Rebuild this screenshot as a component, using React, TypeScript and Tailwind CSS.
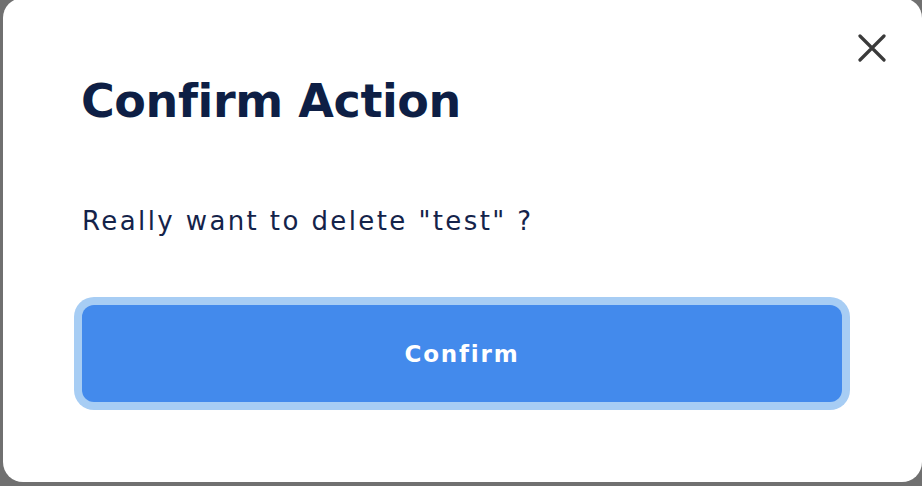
import React from "react";

export default function App() {
  return (
    <div className="w-[922px] h-[486px] bg-[#707070] overflow-hidden">
      <div
        className="relative ml-[3px] mt-[-2px] w-[919px] h-[484px] bg-white rounded-[20px] pl-[79px] pr-[79px]"
        style={{ fontFamily: "'DejaVu Sans', 'Noto Sans', sans-serif" }}
      >
        <button className="absolute right-[36px] top-[36px] w-[28px] h-[28px] flex items-center justify-center">
          <svg width="28" height="28" viewBox="0 0 28 28" fill="none">
            <path d="M2 2L26 26M26 2L2 26" stroke="#3a3a3a" strokeWidth="3.2" strokeLinecap="round" />
          </svg>
        </button>
        <div className="pt-[75px]">
          <h1 className="-ml-[1px] text-[46px] leading-[56px] font-bold text-[#0e1f45] tracking-[-0.4px]">
            Confirm Action
          </h1>
        </div>
        <p className="mt-[77px] text-[26px] leading-[30px] text-[#14234a] tracking-[2.4px]">
          Really want to delete "test" ?
        </p>
        <button className="mt-[69px] w-[760px] h-[97px] rounded-[12px] bg-[#438aec] ring-8 ring-[#a7cdf4] text-white text-[23px] leading-[28px] font-bold tracking-[1.8px] flex items-center justify-center">
          Confirm
        </button>
      </div>
    </div>
  );
}
